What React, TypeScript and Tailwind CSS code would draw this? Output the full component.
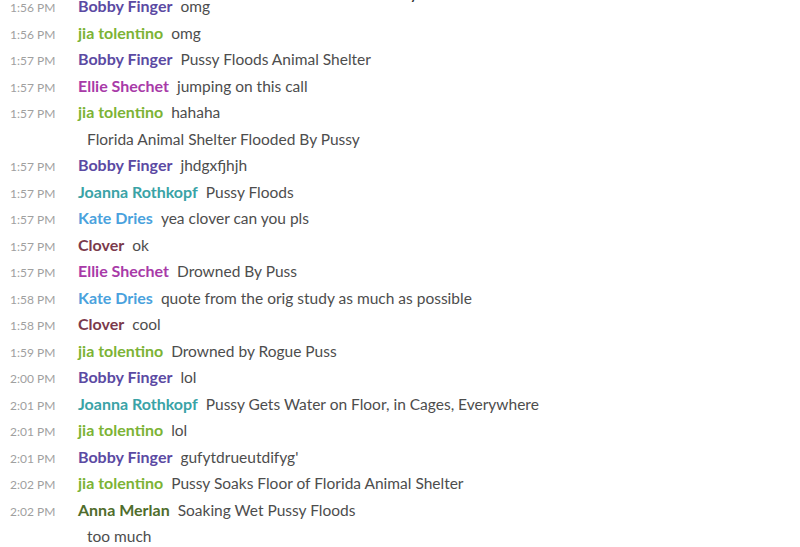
type Msg = { time?: string; name?: string; color?: string; text: string };

const BOBBY = "text-[#5b4aa3]";
const JIA = "text-[#7cb335]";
const ELLIE = "text-[#a83aa8]";
const JOANNA = "text-[#3aa3a6]";
const KATE = "text-[#4aa2dd]";
const CLOVER = "text-[#7b3a4c]";
const ANNA = "text-[#4f6d2c]";

const messages: Msg[] = [
  { time: "1:56 PM", name: "Bobby Finger", color: BOBBY, text: "omg" },
  { time: "1:56 PM", name: "jia tolentino", color: JIA, text: "omg" },
  { time: "1:57 PM", name: "Bobby Finger", color: BOBBY, text: "Pussy Floods Animal Shelter" },
  { time: "1:57 PM", name: "Ellie Shechet", color: ELLIE, text: "jumping on this call" },
  { time: "1:57 PM", name: "jia tolentino", color: JIA, text: "hahaha" },
  { text: "Florida Animal Shelter Flooded By Pussy" },
  { time: "1:57 PM", name: "Bobby Finger", color: BOBBY, text: "jhdgxfjhjh" },
  { time: "1:57 PM", name: "Joanna Rothkopf", color: JOANNA, text: "Pussy Floods" },
  { time: "1:57 PM", name: "Kate Dries", color: KATE, text: "yea clover can you pls" },
  { time: "1:57 PM", name: "Clover", color: CLOVER, text: "ok" },
  { time: "1:57 PM", name: "Ellie Shechet", color: ELLIE, text: "Drowned By Puss" },
  { time: "1:58 PM", name: "Kate Dries", color: KATE, text: "quote from the orig study as much as possible" },
  { time: "1:58 PM", name: "Clover", color: CLOVER, text: "cool" },
  { time: "1:59 PM", name: "jia tolentino", color: JIA, text: "Drowned by Rogue Puss" },
  { time: "2:00 PM", name: "Bobby Finger", color: BOBBY, text: "lol" },
  { time: "2:01 PM", name: "Joanna Rothkopf", color: JOANNA, text: "Pussy Gets Water on Floor, in Cages, Everywhere" },
  { time: "2:01 PM", name: "jia tolentino", color: JIA, text: "lol" },
  { time: "2:01 PM", name: "Bobby Finger", color: BOBBY, text: "gufytdrueutdifyg'" },
  { time: "2:02 PM", name: "jia tolentino", color: JIA, text: "Pussy Soaks Floor of Florida Animal Shelter" },
  { time: "2:02 PM", name: "Anna Merlan", color: ANNA, text: "Soaking Wet Pussy Floods" },
  { text: "too much" },
];

export default function App() {
  return (
    <div className="w-[800px] h-[547px] overflow-hidden bg-white font-['Lato','Liberation_Sans',sans-serif]">
      <div className="-mt-[15px] h-[20px] leading-[20px] text-center text-[13px] font-bold text-[#333] -mb-[12px]">
        Today
      </div>
      <div className="flex flex-col">
        {messages.map((m, i) =>
          m.time ? (
            <div key={i} className="flex items-baseline h-[26.5px] leading-[26.5px]">
              <span className="w-[78px] pl-[10px] shrink-0 text-[12px] text-[#a0a0a0]">{m.time}</span>
              <span className={`text-[16px] font-bold mr-[8px] ${m.color}`}>{m.name}</span>
              <span className="text-[15.5px] text-[#4d4d4d]">{m.text}</span>
            </div>
          ) : (
            <div key={i} className="h-[26.5px] leading-[26.5px] pl-[87px] text-[15.5px] text-[#4d4d4d]">
              {m.text}
            </div>
          )
        )}
      </div>
    </div>
  );
}
